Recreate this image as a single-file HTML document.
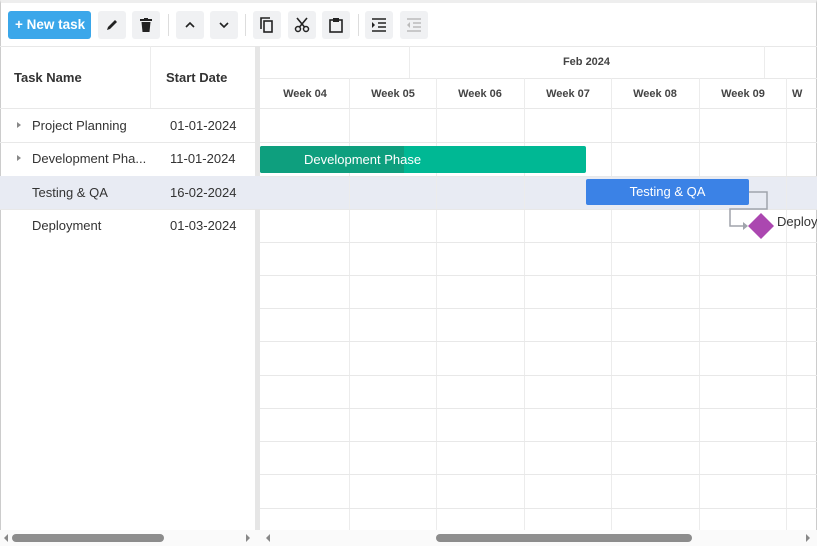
<!DOCTYPE html><html><head><style>
*{box-sizing:border-box;margin:0;padding:0}
body{width:817px;height:546px;overflow:hidden;background:#fff;font-family:"Liberation Sans",sans-serif;color:#333;position:relative}
.abs{position:absolute}
.btn{position:absolute;top:11px;width:28px;height:28px;background:#f0f1f3;border-radius:3px;display:flex;align-items:center;justify-content:center}
.sep{position:absolute;top:14px;width:1px;height:22px;background:#ddd}
.hl{position:absolute;height:1px;background:#e8e8e8}
.vl{position:absolute;width:1px;background:#ececec}
.t{position:absolute;font-size:13px;color:#333}
.wk{position:absolute;top:88px;font-size:11px;font-weight:bold;color:#444;width:88px;text-align:center}
</style></head><body>
<div class="abs" style="left:0;top:0;width:817px;height:546px;border:1px solid #ccc;border-top:3px solid #eee"></div>
<div class="abs" style="left:8px;top:11px;width:83px;height:28px;background:#3ba7ea;border-radius:3px;color:#fff;font-size:13.5px;font-weight:bold;line-height:28px;padding-left:7px">+ New task</div>
<div class="btn" style="left:98px"><svg width="14" height="14" viewBox="0 0 14 14"><path d="M2 12l1-3 7-7 2 2-7 7z" fill="#222"/></svg></div>
<div class="btn" style="left:132px"><svg width="12" height="14" viewBox="0 0 12 14"><rect x="0" y="1" width="12" height="2" fill="#222"/><rect x="4" y="0" width="4" height="2" fill="#222"/><path d="M1.5 4h9l-1 10h-7z" fill="#222"/></svg></div>
<div class="sep" style="left:168px"></div>
<div class="btn" style="left:176px"><svg width="10" height="8" viewBox="0 0 10 8"><path d="M1 6l4-4 4 4" stroke="#222" stroke-width="1.6" fill="none"/></svg></div>
<div class="btn" style="left:210px"><svg width="10" height="8" viewBox="0 0 10 8"><path d="M1 2l4 4 4-4" stroke="#222" stroke-width="1.6" fill="none"/></svg></div>
<div class="sep" style="left:245px"></div>
<div class="btn" style="left:253px"><svg width="14" height="16" viewBox="0 0 14 16"><path d="M1 12V1h9" stroke="#222" stroke-width="1.6" fill="none"/><rect x="4" y="4" width="8" height="11" stroke="#222" stroke-width="1.6" fill="none"/></svg></div>
<div class="btn" style="left:288px"><svg width="16" height="16" viewBox="0 0 16 16"><circle cx="4" cy="12" r="2.5" stroke="#222" stroke-width="1.5" fill="none"/><circle cx="12" cy="12" r="2.5" stroke="#222" stroke-width="1.5" fill="none"/><path d="M5.5 10L13 1M10.5 10L3 1" stroke="#222" stroke-width="1.6"/></svg></div>
<div class="btn" style="left:322px"><svg width="14" height="16" viewBox="0 0 14 16"><rect x="1" y="3" width="12" height="12" stroke="#222" stroke-width="1.6" fill="none"/><rect x="4" y="1" width="6" height="4" fill="#222"/></svg></div>
<div class="sep" style="left:358px"></div>
<div class="btn" style="left:365px"><svg width="16" height="14" viewBox="0 0 16 14"><path d="M1 1h14M7 5h8M7 9h8M1 13h14" stroke="#222" stroke-width="1.5"/><path d="M1 4l3 3-3 3z" fill="#222"/></svg></div>
<div class="btn" style="left:400px"><svg width="16" height="14" viewBox="0 0 16 14"><path d="M1 1h14M7 5h8M7 9h8M1 13h14" stroke="#bbb" stroke-width="1.5"/><path d="M4 4l-3 3 3 3z" fill="#bbb"/></svg></div>
<div class="hl" style="left:0;top:46px;width:817px"></div>
<div class="hl" style="left:0;top:108px;width:255px"></div>
<div class="vl" style="left:150px;top:46px;height:62px"></div>
<div class="t" style="left:14px;top:70px;font-weight:bold">Task Name</div>
<div class="t" style="left:166px;top:70px;font-weight:bold">Start Date</div>
<div class="abs" style="left:255px;top:46px;width:5px;height:500px;background:#e6e6e6"></div>
<div class="abs" style="left:0;top:176px;width:817px;height:33px;background:#e8ebf3"></div>
<div class="hl" style="left:260px;top:78px;width:557px"></div>
<div class="vl" style="left:409px;top:46px;height:32px"></div>
<div class="vl" style="left:764px;top:46px;height:32px"></div>
<div class="abs" style="left:409px;top:56px;width:355px;text-align:center;font-size:11px;font-weight:bold;color:#444">Feb 2024</div>
<div class="hl" style="left:260px;top:108px;width:557px"></div>
<div class="vl" style="left:349px;top:78px;height:452px"></div>
<div class="vl" style="left:436px;top:78px;height:452px"></div>
<div class="vl" style="left:524px;top:78px;height:452px"></div>
<div class="vl" style="left:611px;top:78px;height:452px"></div>
<div class="vl" style="left:699px;top:78px;height:452px"></div>
<div class="vl" style="left:786px;top:78px;height:452px"></div>
<div class="wk" style="left:261px">Week 04</div><div class="wk" style="left:349px">Week 05</div><div class="wk" style="left:436px">Week 06</div><div class="wk" style="left:524px">Week 07</div><div class="wk" style="left:611px">Week 08</div><div class="wk" style="left:699px">Week 09</div><div class="wk" style="left:792px;width:20px;text-align:left">W</div>
<div class="hl" style="left:0;top:142px;width:255px"></div><div class="hl" style="left:0;top:209px;width:255px"></div>
<div class="hl" style="left:260px;top:142px;width:557px"></div><div class="hl" style="left:260px;top:176px;width:557px"></div><div class="hl" style="left:260px;top:209px;width:557px"></div>
<div class="hl" style="left:260px;top:242px;width:557px"></div><div class="hl" style="left:260px;top:275px;width:557px"></div><div class="hl" style="left:260px;top:308px;width:557px"></div><div class="hl" style="left:260px;top:341px;width:557px"></div><div class="hl" style="left:260px;top:375px;width:557px"></div><div class="hl" style="left:260px;top:408px;width:557px"></div><div class="hl" style="left:260px;top:441px;width:557px"></div><div class="hl" style="left:260px;top:474px;width:557px"></div><div class="hl" style="left:260px;top:508px;width:557px"></div>
<div class="abs" style="left:17px;top:122px;width:0;height:0;border-left:4px solid #888;border-top:3.5px solid transparent;border-bottom:3.5px solid transparent"></div>
<div class="abs" style="left:17px;top:155px;width:0;height:0;border-left:4px solid #888;border-top:3.5px solid transparent;border-bottom:3.5px solid transparent"></div>
<div class="t" style="left:32px;top:118px">Project Planning</div><div class="t" style="left:170px;top:118px">01-01-2024</div>
<div class="t" style="left:32px;top:151px">Development Pha...</div><div class="t" style="left:170px;top:151px">11-01-2024</div>
<div class="t" style="left:32px;top:185px">Testing &amp; QA</div><div class="t" style="left:170px;top:185px">16-02-2024</div>
<div class="t" style="left:32px;top:218px">Deployment</div><div class="t" style="left:170px;top:218px">01-03-2024</div>
<div class="abs" style="left:260px;top:146px;width:326px;height:27px;background:#00b894;border-radius:2px"></div>
<div class="abs" style="left:260px;top:146px;width:144px;height:27px;background:#0e9f7e;border-radius:2px 0 0 2px"></div>
<div class="abs" style="left:304px;top:152px;color:#fff;font-size:13px">Development Phase</div>
<div class="abs" style="left:586px;top:179px;width:163px;height:26px;background:#3b82e6;border-radius:2px;color:#fff;font-size:13px;text-align:center;line-height:26px">Testing &amp; QA</div>
<svg class="abs" style="left:0;top:0" width="817" height="546"><path d="M749 192H767V209H730V226H744" stroke="#a0a4ac" stroke-width="1.5" fill="none"/><path d="M743 222l5 4-5 4z" fill="#a0a4ac"/><path d="M761 213l13 13-13 13-13-13z" fill="#ab47b0"/></svg>
<div class="t" style="left:777px;top:214px">Deploy</div>
<div class="abs" style="left:0;top:530px;width:817px;height:16px;background:#fafafa"></div>
<div class="abs" style="left:12px;top:534px;width:152px;height:8px;background:#8c8c8c;border-radius:4px"></div>
<div class="abs" style="left:436px;top:534px;width:256px;height:8px;background:#8c8c8c;border-radius:4px"></div>
<div class="abs" style="left:4px;top:534px;border-right:4px solid #888;border-top:4px solid transparent;border-bottom:4px solid transparent"></div>
<div class="abs" style="left:246px;top:534px;border-left:4px solid #888;border-top:4px solid transparent;border-bottom:4px solid transparent"></div>
<div class="abs" style="left:266px;top:534px;border-right:4px solid #888;border-top:4px solid transparent;border-bottom:4px solid transparent"></div>
<div class="abs" style="left:806px;top:534px;border-left:4px solid #888;border-top:4px solid transparent;border-bottom:4px solid transparent"></div>
</body></html>
